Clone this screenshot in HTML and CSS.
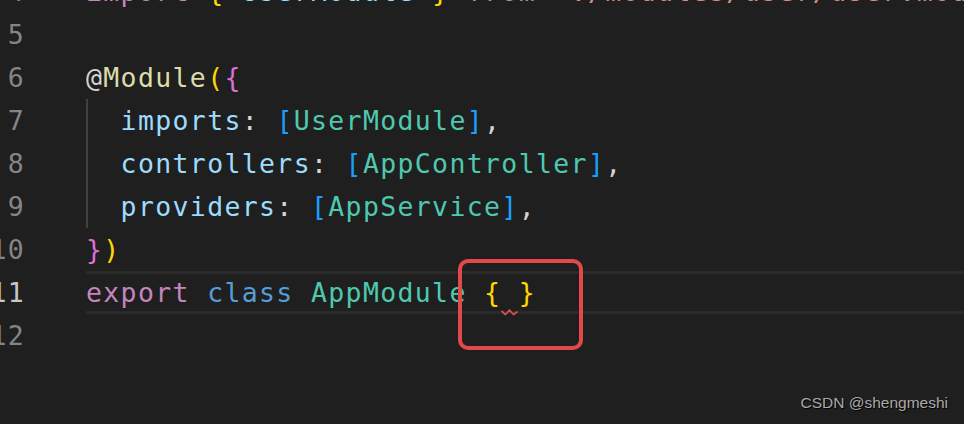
FILE: index.html
```html
<!DOCTYPE html>
<html>
<head>
<meta charset="utf-8">
<link rel="stylesheet" href="styles.css">
</head>
<body>
<div class="editor">
  <div class="line"><span class="ln">4</span><span class="code"><span class="kw">import</span> <span class="b1">{</span> <span class="var">UserModule</span> <span class="b1">}</span> <span class="kw">from</span> <span class="str">'./modules/user/user.module'</span>;</span></div>
  <div class="line"><span class="ln">5</span><span class="code"></span></div>
  <div class="line"><span class="ln">6</span><span class="code"><span class="plain">@</span><span class="fn">Module</span><span class="b1">(</span><span class="b2">{</span></span></div>
  <div class="line"><span class="ln">7</span><span class="code guide">  <span class="var">imports</span><span class="plain">:</span> <span class="b3">[</span><span class="type">UserModule</span><span class="b3">]</span><span class="plain">,</span></span></div>
  <div class="line"><span class="ln">8</span><span class="code guide">  <span class="var">controllers</span><span class="plain">:</span> <span class="b3">[</span><span class="type">AppController</span><span class="b3">]</span><span class="plain">,</span></span></div>
  <div class="line"><span class="ln">9</span><span class="code guide">  <span class="var">providers</span><span class="plain">:</span> <span class="b3">[</span><span class="type">AppService</span><span class="b3">]</span><span class="plain">,</span></span></div>
  <div class="line"><span class="ln">10</span><span class="code"><span class="b2">}</span><span class="b1">)</span></span></div>
  <div class="line active"><span class="ln">11</span><span class="code current"><span class="kw">export</span> <span class="st">class</span> <span class="type">AppModule</span> <span class="b1">{</span><span class="squig"> <svg class="wave" width="17" height="7" viewBox="0 0 17 7"><path d="M0.5 2 L4.5 5.5 L8.5 1.2 L12.5 5.5 L16.5 2.5" fill="none" stroke="#d4504c" stroke-width="1.7" stroke-linejoin="round"/></svg></span><span class="b1">}</span></span></div>
  <div class="line"><span class="ln">12</span><span class="code"></span></div>
</div>
<div class="mark"></div>
<div class="watermark">CSDN @shengmeshi</div>
</body>
</html>
```
FILE: styles.css
```css
html, body {
  margin: 0;
  padding: 0;
  width: 964px;
  height: 424px;
  overflow: hidden;
  background: #1f1f1f;
}
body {
  position: relative;
}
.editor {
  margin-top: -30px;
  margin-left: -18px;
  font-family: "DejaVu Sans Mono", monospace;
  font-size: 26.5px;
  letter-spacing: 1.35px;
  line-height: 43px;
  color: #d4d4d4;
}
.line {
  display: flex;
  height: 43px;
  white-space: pre;
}
.ln {
  width: 43px;
  flex: none;
  text-align: right;
  color: #858585;
}
.active .ln {
  color: #c6c6c6;
}
.code {
  flex: 1;
  margin-left: 61px;
  box-sizing: border-box;
}
.guide {
  box-shadow: inset 2px 0 #404040;
}
.current {
  border-top: 3px solid #2a2a2a;
  border-bottom: 3px solid #2a2a2a;
  line-height: 37px;
}
.kw { color: #c586c0; }
.st { color: #569cd6; }
.fn { color: #dcdcaa; }
.var { color: #9cdcfe; }
.type { color: #4ec9b0; }
.str { color: #ce9178; }
.plain { color: #d4d4d4; }
.b1 { color: #ffd700; }
.b2 { color: #da70d6; }
.b3 { color: #179fff; }
.squig {
  position: relative;
}
.wave {
  position: absolute;
  left: 0;
  top: 32px;
}
.mark {
  position: absolute;
  left: 458px;
  top: 259px;
  width: 125px;
  height: 91px;
  box-sizing: border-box;
  border: 4px solid #e24a4a;
  border-radius: 10px;
}
.watermark {
  position: absolute;
  right: 16px;
  top: 394px;
  font-family: "Liberation Sans", Arial, sans-serif;
  font-size: 15.5px;
  color: #a9a9a9;
  text-shadow: 1px 1px 1px #000;
}
```
